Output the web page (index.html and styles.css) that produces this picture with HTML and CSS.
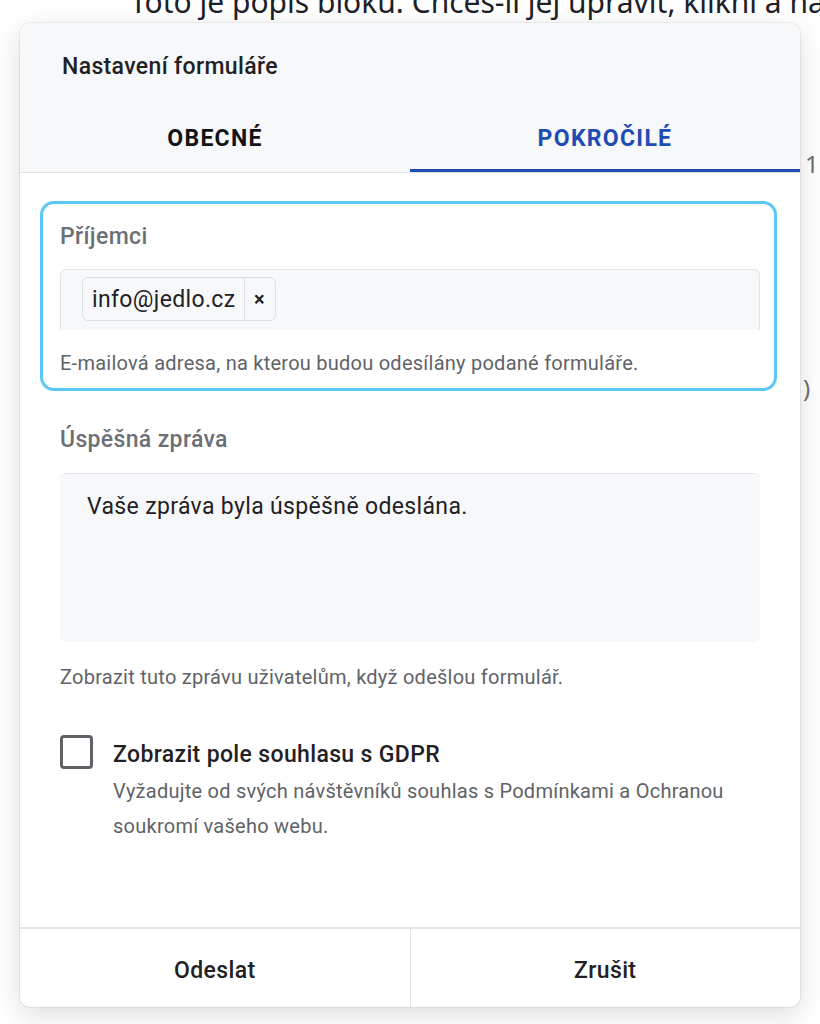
FILE: index.html
```html
<!DOCTYPE html>
<html lang="cs">
<head>
<meta charset="utf-8">
<title>Nastavení formuláře</title>
<link rel="stylesheet" href="styles.css">
</head>
<body>
<div class="page">
  <p class="page-text">Toto je popis bloku. Chceš-li jej upravit, klikni a na</p>
  <div class="page-side">
    <span class="side-one">1</span>
    <span class="side-two">)</span>
  </div>
</div>

<div class="modal">
  <div class="modal-head">
    <div class="modal-title">Nastavení formuláře</div>
    <div class="tabs">
      <div class="tab">OBECNÉ</div>
      <div class="tab tab-active">POKROČILÉ</div>
    </div>
  </div>

  <div class="modal-body">
    <div class="field field-focus">
      <div class="field-label">Příjemci</div>
      <div class="input">
        <span class="tag"><span class="tag-text">info@jedlo.cz</span><span class="tag-x">×</span></span>
      </div>
      <div class="help">E-mailová adresa, na kterou budou odesílány podané formuláře.</div>
    </div>

    <div class="field field-plain">
      <div class="field-label">Úspěšná zpráva</div>
      <div class="textarea">Vaše zpráva byla úspěšně odeslána.</div>
      <div class="help">Zobrazit tuto zprávu uživatelům, když odešlou formulář.</div>
    </div>

    <div class="check-row">
      <span class="checkbox"></span>
      <div class="check-text">
        <div class="check-title">Zobrazit pole souhlasu s GDPR</div>
        <div class="check-desc">Vyžadujte od svých návštěvníků souhlas s Podmínkami a Ochranou soukromí vašeho webu.</div>
      </div>
    </div>
  </div>

  <div class="modal-foot">
    <div class="btn">Odeslat</div>
    <div class="btn">Zrušit</div>
  </div>
</div>
</body>
</html>
```

FILE: styles.css
```css
* { box-sizing: border-box; }
html, body { margin: 0; padding: 0; }
body {
  background: #ffffff;
  font-family: Roboto, "Liberation Sans", sans-serif;
  color: #1f2124;
  width: 820px;
  height: 1024px;
  overflow: hidden;
  position: relative;
}

.page { position: relative; overflow: hidden; width: 820px; }
.page-text {
  margin: -13px 0 0 0;
  padding-left: 130px;
  font-family: "Noto Sans", "Open Sans", sans-serif;
  font-size: 30px;
  line-height: 30px;
  color: #1d2127;
  white-space: nowrap;
}
.page-side {
  display: flex;
  flex-direction: column;
  align-items: flex-start;
  padding-left: 805px;
  font-family: "Noto Sans", sans-serif;
  font-size: 24px;
  color: #6b6f76;
}
.side-one { margin-top: 132px; line-height: 30px; }
.side-two { margin-top: 194px; margin-left: -2px; line-height: 30px; }

.modal {
  position: absolute;
  left: 20px;
  top: 23px;
  width: 780px;
  height: 984px;
  background: #ffffff;
  border-radius: 10px;
  box-shadow: 0 8px 28px rgba(0, 0, 0, 0.14), 0 0 0 1px rgba(0, 0, 0, 0.06);
  display: flex;
  flex-direction: column;
  overflow: hidden;
}

.modal-head {
  background: #f7f8fa;
  border-bottom: 1px solid #e2e4e8;
}
.modal-title {
  padding: 30px 0 0 42px;
  height: 83px;
  font-size: 23px;
  font-weight: 500;
  letter-spacing: 0.35px;
  line-height: 28px;
  color: #1f2124;
}
.tabs { display: flex; }
.tab {
  flex: 1;
  text-align: center;
  height: 66px;
  padding-top: 19px;
  font-size: 23px;
  font-weight: 700;
  line-height: 28px;
  letter-spacing: 1.3px;
  color: #111316;
  border-bottom: 3px solid transparent;
}
.tab-active {
  color: #1e4bb4;
  border-bottom-color: #1e4bb4;
}

.modal-body {
  flex: 1;
  padding: 28px 40px 0 40px;
}

.field-label {
  font-size: 23px;
  font-weight: 500;
  line-height: 28px;
  letter-spacing: 0.35px;
  color: #6b6f76;
}
.field-focus {
  margin: 0 -17px 0 -20px;
  padding: 19px 14px 13px 17px;
  border: 3px solid #5ac7f6;
  border-radius: 14px;
}
.input {
  margin-top: 18px;
  height: 61px;
  background: #f7f8fa;
  border: 1px solid #e3e5e8;
  border-bottom: none;
  border-radius: 6px 6px 0 0;
  padding: 7px 21px;
  display: flex;
  align-items: flex-start;
}
.tag {
  display: inline-flex;
  align-items: stretch;
  height: 44px;
  border: 1px solid #dcdfe3;
  border-radius: 6px;
  background: #f7f8fa;
  font-size: 23px;
  letter-spacing: 0.35px;
  color: #1f2124;
}
.tag-text {
  padding: 0 8px 0 9px;
  display: flex;
  align-items: center;
}
.tag-x {
  border-left: 1px solid #dcdfe3;
  width: 31px;
  display: flex;
  align-items: center;
  justify-content: center;
  font-size: 20px;
  font-weight: 700;
}
.help {
  margin-top: 21px;
  font-size: 20px;
  line-height: 24px;
  letter-spacing: 0.25px;
  color: #5f6368;
}

.field-plain { margin-top: 35px; }
.textarea {
  margin-top: 19px;
  height: 169px;
  background: #f7f8fa;
  border-top: 1px solid #e3e5e8;
  border-radius: 6px;
  padding: 19px 27px;
  font-size: 23px;
  line-height: 28px;
  letter-spacing: 0.35px;
  color: #1f2124;
}
.field-plain .help { margin-top: 23px; }

.check-row {
  margin-top: 46px;
  display: flex;
  gap: 20px;
}
.checkbox {
  flex: none;
  width: 33px;
  height: 34px;
  border: 3px solid #5f6368;
  border-radius: 4px;
}
.check-title {
  margin-top: 6px;
  font-size: 23px;
  font-weight: 500;
  line-height: 28px;
  letter-spacing: 0.35px;
  color: #1f2124;
}
.check-desc {
  margin-top: 5px;
  font-size: 20px;
  line-height: 35px;
  letter-spacing: 0.25px;
  color: #5f6368;
  max-width: 640px;
}

.modal-foot {
  height: 80px;
  border-top: 2px solid #e2e4e8;
  display: flex;
}
.btn {
  flex: 1;
  display: flex;
  align-items: center;
  justify-content: center;
  padding-top: 5px;
  font-size: 23px;
  font-weight: 500;
  letter-spacing: 0.35px;
  color: #1f2124;
}
.btn + .btn { border-left: 1px solid #e2e4e8; }
```
